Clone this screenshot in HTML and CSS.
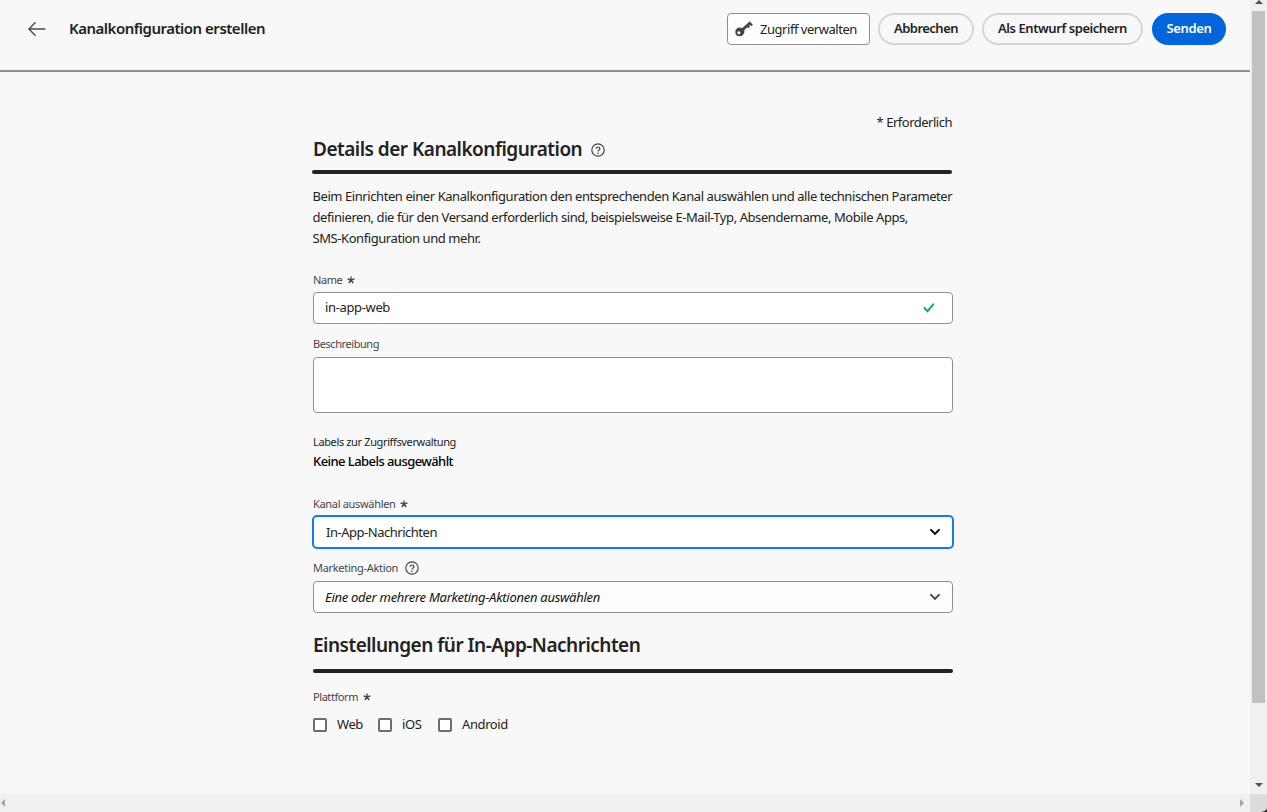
FILE: index.html
```html
<!DOCTYPE html>
<html lang="de">
<head>
<meta charset="utf-8">
<title>Kanalkonfiguration erstellen</title>
<link rel="stylesheet" href="styles.css">
</head>
<body>
<div class="window">
  <div class="page">
    <header class="topbar">
      <svg class="back" viewBox="0 0 18 16"><path d="M7.500 1.200.9 8l6.600 6.800M1 8h16.500"/></svg>
      <h1 class="title">Kanalkonfiguration erstellen</h1>
      <div class="actions">
        <button class="btn access"><svg class="key" viewBox="0 0 18 16"><path fill-rule="evenodd" d="M4.600 6.600c1 0 1.700.2 2.400.7L14 .9c.3-.3.700-.4 1-.1l2.500 2.400c.4.400.3.800 0 1.100l-1 1-1.500-1.300-1 .9 1 1.200-1.300 1.200-1.300-1.100-3.200 3c.3.600.3 1.300.2 2-.3 2.300-2.300 4-4.700 4A4.400 4.400 0 0 1 .3 10.900c0-2.400 2-4.300 4.300-4.300ZM3.900 10.300a1.500 1.500 0 1 0 0 3 1.500 1.500 0 0 0 0-3Z"/></svg><span>Zugriff verwalten</span></button>
        <button class="btn pill cancel">Abbrechen</button>
        <button class="btn pill draft">Als Entwurf speichern</button>
        <button class="btn pill send">Senden</button>
      </div>
    </header>
    <main class="form">
      <p class="required">* Erforderlich</p>
      <h2 class="heading heading-details">Details der Kanalkonfiguration<svg class="help" viewBox="0 0 14 14"><circle cx="7" cy="7" r="6.200"/><path d="M5.200 5.700c0-2.300 3.700-2.200 3.700 0 0 1.300-1.900 1.300-1.900 2.700M7 9.500v1.400"/></svg></h2>
      <p class="intro">Beim Einrichten einer Kanalkonfiguration den entsprechenden Kanal auswählen und alle technischen Parameter<br>definieren, die für den Versand erforderlich sind, beispielsweise E-Mail-Typ, Absendername, Mobile Apps,<br>SMS-Konfiguration und mehr.</p>

      <div class="label label-name">Name<svg class="star" viewBox="0 0 8 8"><path d="M4 4V.4M4 4l3.500-1.100M4 4l2.200 3M4 4 1.800 7M4 4 .5 2.900"/></svg></div>
      <div class="field name"><span>in-app-web</span><svg class="check" viewBox="0 0 12 10"><path d="m1.500 5 3 3.300 5.700-7"/></svg></div>

      <div class="label label-description">Beschreibung</div>
      <div class="field area"></div>

      <div class="label label-access">Labels zur Zugriffsverwaltung</div>
      <div class="none">Keine Labels ausgewählt</div>

      <div class="label label-channel">Kanal auswählen<svg class="star" viewBox="0 0 8 8"><path d="M4 4V.4M4 4l3.500-1.100M4 4l2.200 3M4 4 1.800 7M4 4 .5 2.900"/></svg></div>
      <div class="field focused"><span>In-App-Nachrichten</span><svg class="chevron" viewBox="0 0 12 8"><path d="m2 1.900 4 4 4-4"/></svg></div>

      <div class="label label-marketing">Marketing-Aktion<svg class="help" viewBox="0 0 14 14"><circle cx="7" cy="7" r="6.200"/><path d="M5.200 5.700c0-2.300 3.700-2.200 3.700 0 0 1.300-1.900 1.300-1.900 2.700M7 9.500v1.400"/></svg></div>
      <div class="field marketing"><span class="placeholder">Eine oder mehrere Marketing-Aktionen auswählen</span><svg class="chevron" viewBox="0 0 12 8"><path d="m2 1.900 4 4 4-4"/></svg></div>

      <h2 class="heading heading-settings">Einstellungen für In-App-Nachrichten</h2>
      <div class="label label-platform">Plattform<svg class="star" viewBox="0 0 8 8"><path d="M4 4V.4M4 4l3.500-1.100M4 4l2.200 3M4 4 1.800 7M4 4 .5 2.900"/></svg></div>
      <div class="platforms">
        <label class="option web"><span class="box"></span>Web</label>
        <label class="option ios"><span class="box"></span>iOS</label>
        <label class="option"><span class="box"></span>Android</label>
      </div>
    </main>
  </div>
  <div class="scroll-y">
    <svg class="arrow-up" viewBox="0 0 8 4"><path d="m0 4 4-4 4 4z"/></svg>
    <div class="thumb"></div>
    <svg class="arrow-down" viewBox="0 0 8 4"><path d="m0 0 4 4 4-4z"/></svg>
  </div>
  <div class="scroll-x">
    <svg viewBox="0 0 4 8"><path d="M4 0 0 4l4 4z"/></svg>
    <svg viewBox="0 0 4 8"><path d="m0 0 4 4-4 4z"/></svg>
  </div>
  <div class="corner"><svg viewBox="0 0 6 3"><path d="M6 0v3H0q4-.5 6-3z"/></svg></div>
</div>
</body>
</html>
```
FILE: styles.css
```css
* { box-sizing: border-box; }
body {
  margin: 0;
  background: #f8f8f8;
  color: #222;
  font: 13px/18px "Noto Sans", sans-serif;
  letter-spacing: -.43px;
  white-space: nowrap;
  overflow: hidden;
}
h1, h2, p { margin: 0; }
svg { display: block; flex: none; }
.window {
  display: grid;
  grid-template: 794px 18px / 1250px 17px;
  width: 1267px;
  height: 812px;
}

.topbar {
  display: flex;
  align-items: flex-start;
  height: 72px;
  padding: 13px 24px 0 28px;
  border-bottom: 2px solid #8e8e8e;
}
.back { width: 18px; height: 16px; margin-top: 8px; fill: none; stroke: #4b4b4b; stroke-width: 1.4; }
.title { margin: 5px 0 0 23px; font-size: 15px; line-height: 20px; font-weight: 600; letter-spacing: -.497px; }
.actions { display: flex; gap: 8px; margin-left: auto; }
.btn {
  display: flex;
  align-items: center;
  justify-content: center;
  height: 32px;
  padding: 0;
  font: 13px/18px "Noto Sans", sans-serif;
  color: #222;
  background: #f8f8f8;
  border: 2px solid #d5d5d5;
}
.access {
  width: 143px;
  justify-content: flex-start;
  padding: 0 0 0 7px;
  background: #fff;
  border: 1px solid #909090;
  border-radius: 4px;
  letter-spacing: -.46px;
}
.key { width: 18px; height: 16px; margin: 0 7px 0 0; fill: #464646; }
.pill { border-radius: 16px; font-weight: 600; padding-bottom: 2px; }
.cancel { width: 96px; letter-spacing: -.52px; }
.draft { width: 161px; letter-spacing: -.44px; }
.send { width: 74px; margin-left: 1px; color: #fff; background: #0265dc; border-color: #0265dc; letter-spacing: -.35px; }

.form { width: 640px; margin: 41px 0 0 313px; }
.required { text-align: right; padding-right: 1px; letter-spacing: -.49px; }
.heading {
  display: flex;
  align-items: center;
  height: 43px;
  padding-bottom: 15px;
  font-size: 19px;
  line-height: 24px;
  font-weight: 600;
  letter-spacing: -.51px;
  position: relative;
}
.heading::after {
  content: "";
  position: absolute;
  left: 0;
  bottom: 0;
  width: 640px;
  height: 4px;
  border-radius: 2px;
  background: #222;
}
.heading-details { padding-bottom: 7px; }
.heading-details::after { left: -1px; }
.help { width: 14px; height: 14px; fill: none; stroke: #464646; stroke-width: 1.2; }
.heading .help { margin: 2px 0 0 9px; }
.intro { margin: 12px 0 0 -.5px; line-height: 21px; letter-spacing: -.427px; }

.label { display: flex; align-items: center; height: 18px; font-size: 11px; color: #464646; }
.star { width: 8px; height: 8px; margin-left: 4.500px; fill: none; stroke: #464646; stroke-width: 1.35; }
.label .help { margin-left: 7px; }
.label-name { margin-top: 22px; }
.label-description { margin-top: 11px; }
.label-access { margin-top: 20px; color: #222; letter-spacing: -.366px; }
.label-channel { margin-top: 25px; letter-spacing: -.32px; }
.label-marketing { margin-top: 10px; letter-spacing: -.3px; }
.label-platform { margin-top: 15px; }

.field {
  display: flex;
  align-items: center;
  justify-content: space-between;
  height: 32px;
  padding: 0 11px;
  background: #fff;
  border: 1px solid #909090;
  border-radius: 4px;
}
.name { margin-top: 3px; padding: 0 17px 2px 11px; letter-spacing: -.36px; }
.check { width: 12px; height: 10px; margin-top: 1px; fill: none; stroke: #12a572; stroke-width: 2; stroke-linecap: round; }
.area { height: 56px; margin-top: 4px; }
.none { margin-top: 1px; font-weight: 500; color: #000; letter-spacing: -.565px; }
.focused {
  width: 642px;
  height: 34px;
  margin: 2px 0 0 -1px;
  padding-left: 12px;
  border: 2px solid #147af3;
  border-radius: 5px;
  letter-spacing: -.48px;
}
.chevron { width: 12px; height: 8px; fill: none; stroke: #464646; stroke-width: 2; stroke-linecap: round; }
.focused .chevron { stroke: #000; }
.marketing { margin-top: 4px; background: #fdfdfd; }
.placeholder { font-style: italic; letter-spacing: -.276px; color: #111; }
.heading-settings { margin-top: 17px; padding-bottom: 13px; }

.platforms { display: flex; margin-top: 9px; }
.option { display: flex; align-items: center; letter-spacing: -.4px; }
.box { width: 14px; height: 14px; margin: 2px 10px 0 0; background: #fff; border: 2px solid #6d6d6d; border-radius: 2px; }
.web { width: 65px; }
.ios { width: 60px; }

.scroll-y { display: flex; flex-direction: column; align-items: center; background: #f0f0f0; }
.arrow-up, .arrow-down { width: 8px; height: 4px; fill: #505050; }
.thumb { width: 13px; height: 692px; margin-top: 7px; background: #c1c1c1; }
.arrow-down { margin-top: auto; margin-bottom: 7px; }
.scroll-x { display: flex; align-items: center; justify-content: space-between; padding: 0 6px 1px 1px; background: #f0f0f0; }
.scroll-x svg { width: 4px; height: 8px; fill: #a3a3a3; }
.corner { display: flex; align-items: flex-end; justify-content: flex-end; background: #dcdcdc; }
.corner svg { width: 6px; height: 3px; fill: #333; }
```
